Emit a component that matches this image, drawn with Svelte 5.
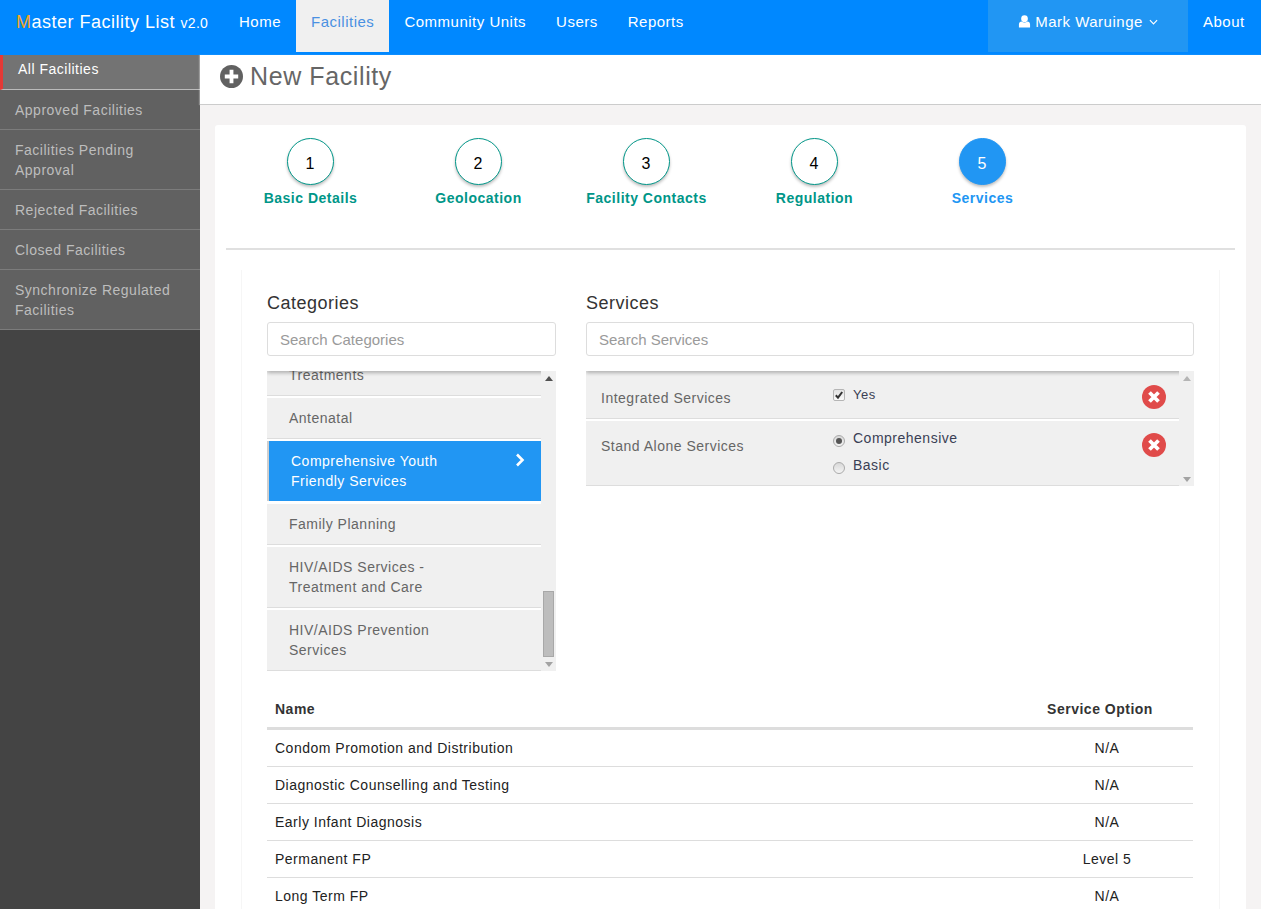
<script>
	const navLinks = ['Home', 'Facilities', 'Community Units', 'Users', 'Reports'];
	const sideLinks = [
		'All Facilities',
		'Approved Facilities',
		'Facilities Pending Approval',
		'Rejected Facilities',
		'Closed Facilities',
		'Synchronize Regulated Facilities'
	];
	const steps = ['Basic Details', 'Geolocation', 'Facility Contacts', 'Regulation', 'Services'];
	const categories = [
		'Antenatal',
		'Comprehensive Youth Friendly Services',
		'Family Planning',
		'HIV/AIDS Services - Treatment and Care',
		'HIV/AIDS Prevention Services'
	];
	const rows = [
		['Condom Promotion and Distribution', 'N/A'],
		['Diagnostic Counselling and Testing', 'N/A'],
		['Early Infant Diagnosis', 'N/A'],
		['Permanent FP', 'Level 5'],
		['Long Term FP', 'N/A']
	];
</script>

<div class="page">
	<header class="navbar">
		<div class="brand"><span class="m">M</span>aster Facility List <small>v2.0</small></div>
		<nav class="links">
			{#each navLinks as link, i}
				<span class="link" class:active={i === 1}>{link}</span>
			{/each}
		</nav>
		<div class="right">
			<div class="user">
				<svg class="user-icon" viewBox="0 0 14 14" width="13" height="13">
					<circle cx="7" cy="4" r="3.6" fill="#fff" />
					<path d="M1 13.4V10.2C1 8.4 2.2 7 4 7c.8.7 1.8 1 3 1s2.200-.3 3-1c1.800 0 3 1.400 3 3.200v3.200z" fill="#fff" />
				</svg>
				<span>Mark Waruinge</span>
				<svg class="caret" viewBox="0 0 10 6" width="9" height="6">
					<path d="M1 1l4 4 4-4" fill="none" stroke="#fff" stroke-width="1.300" />
				</svg>
			</div>
			<span class="link about">About</span>
		</div>
	</header>

	<div class="body">
		<aside class="sidebar">
			{#each sideLinks as link, i}
				<div class="side-item" class:current={i === 0}>{link}</div>
			{/each}
		</aside>

		<main class="content">
			<div class="title-bar">
				<svg viewBox="0 0 24 24" width="23" height="23">
					<circle cx="12" cy="12" r="12" fill="#616161" />
					<path d="M10 5h4v5h5v4h-5v5h-4v-5H5v-4h5z" fill="#fff" />
				</svg>
				<h1>New Facility</h1>
			</div>

			<section class="card">
				<div class="steps">
					{#each steps as step, i}
						<div class="step" class:on={i === 4}>
							<div class="circle">{i + 1}</div>
							<div class="step-label">{step}</div>
						</div>
					{/each}
				</div>
				<hr />

				<div class="inner">
					<div class="columns">
						<div class="col-cat">
							<h2>Categories</h2>
							<input type="text" placeholder="Search Categories" />
							<div class="scroller">
								<div class="list">
									<div class="cat clipped">Treatments</div>
									{#each categories as cat, i}
										<div class="cat" class:selected={i === 1}>
											<span>{cat}</span>
											{#if i === 1}
												<svg viewBox="0 0 10 14" width="10" height="14">
													<path d="M2 1.500L7.500 7 2 12.500" fill="none" stroke="#fff" stroke-width="2.600" />
												</svg>
											{/if}
										</div>
									{/each}
								</div>
								<div class="bar">
									<i class="up"></i>
									<b class="thumb"></b>
									<i class="down"></i>
								</div>
							</div>
						</div>

						<div class="col-srv">
							<h2>Services</h2>
							<input type="text" placeholder="Search Services" />
							<div class="scroller srv">
								<div class="list">
									<div class="srv-row">
										<div class="srv-name">Integrated Services</div>
										<div class="srv-opts">
											<div class="opt">
												<span class="box">
													<svg viewBox="0 0 12 12" width="12" height="12">
														<path d="M2.800 6.200L5 8.600 9.200 3" fill="none" stroke="#333" stroke-width="2" />
													</svg>
												</span>
												Yes
											</div>
										</div>
										<svg class="remove" viewBox="0 0 24 24" width="24" height="24">
											<circle cx="12" cy="12" r="12" fill="#e04b4a" />
											<path d="M7.500 7.500l9 9M16.500 7.500l-9 9" stroke="#fff" stroke-width="3.800" />
										</svg>
									</div>
									<div class="srv-row last">
										<div class="srv-name">Stand Alone Services</div>
										<div class="srv-opts">
											<div class="opt big"><span class="box round on"></span>Comprehensive</div>
											<div class="opt big"><span class="box round"></span>Basic</div>
										</div>
										<svg class="remove" viewBox="0 0 24 24" width="24" height="24">
											<circle cx="12" cy="12" r="12" fill="#e04b4a" />
											<path d="M7.500 7.500l9 9M16.500 7.500l-9 9" stroke="#fff" stroke-width="3.800" />
										</svg>
									</div>
								</div>
								<div class="bar plain">
									<i class="up light"></i>
									<i class="down"></i>
								</div>
							</div>
						</div>
					</div>

					<table>
						<thead>
							<tr><th>Name</th><th class="opt-col">Service Option</th></tr>
						</thead>
						<tbody>
							{#each rows as row}
								<tr><td>{row[0]}</td><td class="opt-col val">{row[1]}</td></tr>
							{/each}
						</tbody>
					</table>
				</div>
			</section>
		</main>
	</div>
</div>

<style>
	:global(body) {
		margin: 0;
		font-family: 'Liberation Sans', Arial, sans-serif;
		font-size: 14px;
		letter-spacing: 0.5px;
	}

	.page {
		height: 909px;
		overflow: hidden;
		display: flex;
		flex-direction: column;
	}

	.navbar {
		flex: none;
		height: 55px;
		background: #0088ff;
		display: flex;
		color: #fff;
	}

	.brand {
		padding: 13px 0 0 16px;
		width: 208px;
		box-sizing: border-box;
		font-size: 18px;
		line-height: 18px;
		letter-spacing: 0.5px;
		white-space: nowrap;
	}

	.brand .m {
		color: #f5a623;
	}

	.brand small {
		font-size: 14px;
		letter-spacing: 0.3px;
	}

	.links {
		display: flex;
		margin-left: 16px;
	}

	.link {
		height: 52px;
		box-sizing: border-box;
		padding: 14px 15px 0;
		line-height: 16px;
		font-size: 15px;
	}

	.link.active {
		background: #f0f0f0;
		color: #4a90e2;
	}

	.right {
		margin-left: auto;
		display: flex;
	}

	.user {
		width: 200px;
		height: 52px;
		background: #2196f3;
		display: flex;
		align-items: flex-start;
		justify-content: center;
		gap: 4px;
		padding-top: 14px;
		box-sizing: border-box;
		line-height: 16px;
		font-size: 15px;
	}

	.user-icon {
		margin-top: 1px;
	}

	.caret {
		margin: 5px 0 0 2px;
	}

	.about {
		width: 73px;
	}

	.body {
		flex: 1;
		display: flex;
		min-height: 0;
	}

	.sidebar {
		flex: none;
		width: 200px;
		background: #444;
		color: #bdbdbd;
	}

	.side-item {
		background: #616161;
		border-bottom: 1px solid #7c7c7c;
		padding: 10px 15px 9px;
		line-height: 20px;
	}

	.side-item.current {
		background: #737373;
		color: #fff;
		border-left: 3px solid #e53935;
		border-bottom-color: #bbb;
		padding: 4px 15px 10px;
	}

	.content {
		flex: 1;
		background: #f5f3f3;
		min-width: 0;
	}

	.title-bar {
		height: 43px;
		background: #fff;
		border-bottom: 1px solid #ccc;
		display: flex;
		align-items: center;
		padding: 0 0 6px 20px;
		gap: 7px;
		box-shadow: -1px 0 1px rgba(255, 255, 255, 0.3);
	}

	h1 {
		margin: 0;
		font-size: 25px;
		font-weight: 400;
		color: #666;
		letter-spacing: 0.6px;
	}

	.card {
		margin: 20px 15px 0;
		background: #fff;
		border-radius: 3px;
		padding: 13px 11px 0;
	}

	.steps {
		display: flex;
		height: 110px;
	}

	.step {
		width: 168px;
		display: flex;
		flex-direction: column;
		align-items: center;
		color: #009688;
		font-weight: 700;
	}

	.circle {
		width: 47px;
		height: 47px;
		box-sizing: border-box;
		border-radius: 50%;
		border: 1px solid #009688;
		background: #fff;
		color: #000;
		font-weight: 400;
		font-size: 16px;
		display: flex;
		align-items: center;
		justify-content: center;
		padding-top: 4px;
		box-shadow: 0 2px 3px rgba(0, 0, 0, 0.25);
		letter-spacing: 0;
	}

	.step-label {
		margin-top: 5px;
		padding-left: 1px;
		line-height: 16px;
		white-space: nowrap;
	}

	.step.on {
		color: #2196f3;
	}

	.step.on .circle {
		background: #2196f3;
		border-color: #2196f3;
		color: #fff;
	}

	hr {
		margin: 0;
		border: none;
		border-top: 2px solid #e0e0e0;
	}

	.inner {
		margin: 20px 15px 0;
		padding: 22px 26px 0 25px;
		border-left: 1px solid #f6f6f6;
		border-right: 1px solid #f6f6f6;
		box-sizing: border-box;
	}

	.columns {
		display: flex;
		gap: 30px;
	}

	.col-cat {
		width: 289px;
		flex: none;
	}

	.col-srv {
		width: 608px;
		flex: none;
	}

	h2 {
		margin: 0 0 8px;
		font-size: 18px;
		line-height: 22px;
		font-weight: 400;
		color: #333;
	}

	input[type='text'] {
		display: block;
		width: 100%;
		height: 34px;
		box-sizing: border-box;
		border: 1px solid #ddd;
		border-radius: 3px;
		padding: 0 12px;
		font: inherit;
		font-size: 15px;
		letter-spacing: 0;
		outline: none;
		background: #fff;
	}

	input::placeholder {
		color: #9a9a9a;
		opacity: 1;
	}

	.scroller {
		margin-top: 15px;
		height: 300px;
		display: flex;
		background: #f0f0f0;
		overflow: hidden;
		position: relative;
	}

	.scroller::before {
		content: '';
		position: absolute;
		left: 0;
		right: 0;
		top: -3px;
		height: 3px;
		box-shadow: 0 1px 4px rgba(0, 0, 0, 0.45);
	}

	.scroller.srv {
		height: 115px;
	}

	.list {
		flex: 1;
		min-width: 0;
		background: #fff;
	}

	.bar {
		flex: none;
		width: 15px;
		position: relative;
		background: #f0f0f0;
	}

	.bar i {
		position: absolute;
		left: 4px;
		width: 0;
		height: 0;
		border-left: 4px solid transparent;
		border-right: 4px solid transparent;
	}

	.up {
		top: 5px;
		border-bottom: 5px solid #505050;
	}

	.up.light {
		border-bottom-color: #b5b5b5;
	}

	.down {
		bottom: 4px;
		border-top: 5px solid #a3a3a3;
	}

	.thumb {
		position: absolute;
		left: 2px;
		right: 2px;
		bottom: 14px;
		height: 66px;
		background: #bdbdbd;
		border: 1px solid #a8a8a8;
		box-sizing: border-box;
	}

	.cat {
		display: flex;
		justify-content: space-between;
		background: #f0f0f0;
		border-bottom: 1px solid #ddd;
		color: #666;
		line-height: 20px;
		padding: 10px 16px 10px 22px;
		margin-bottom: 2px;
	}

	.cat span {
		width: 175px;
	}

	.cat.clipped {
		margin-top: -16px;
	}

	.cat.selected {
		background: #2196f3;
		color: #fff;
		border-left: 2px solid #cfcfcf;
		border-bottom: none;
		height: 60px;
		box-sizing: border-box;
		margin-bottom: 3px;
	}

	.cat.selected svg {
		margin-top: 2px;
	}

	.cat:not(.selected) span {
		width: 190px;
	}

	.srv-row {
		display: flex;
		align-items: flex-start;
		background: #f0f0f0;
		border-bottom: 1px solid #ddd;
		color: #666;
		height: 48px;
		box-sizing: border-box;
		margin-bottom: 2px;
		padding: 17px 0 0 15px;
	}

	.srv-row.last {
		height: 65px;
		margin-bottom: 0;
		padding-top: 15px;
	}

	.srv-name {
		width: 232px;
		flex: none;
		line-height: 20px;
	}

	.srv-opts {
		flex: 1;
		margin-top: -2px;
	}

	.last .srv-opts {
		margin-top: -12px;
	}

	.opt {
		display: flex;
		align-items: center;
		font-size: 13px;
		line-height: 18px;
		color: #3a3f55;
	}

	.opt.big {
		font-size: 14px;
		height: 27px;
	}

	.box {
		width: 12px;
		height: 12px;
		margin: 0 8px 0 0;
		flex: none;
		box-sizing: border-box;
		border: 1px solid #b5b5b5;
		border-radius: 2px;
		background: linear-gradient(#e2e2e2, #fafafa);
		display: flex;
		align-items: center;
		justify-content: center;
	}

	.box svg {
		flex: none;
	}

	.opt.big .box {
		margin-top: 7px;
	}

	.box.round {
		border-radius: 50%;
		border-color: #aaa;
		background: linear-gradient(#d8d8d8, #f4f4f4);
	}

	.box.on::after {
		content: '';
		width: 6px;
		height: 6px;
		border-radius: 50%;
		background: #555;
	}

	.remove {
		flex: none;
		margin: -3px 13px 0 0;
	}

	table {
		width: 100%;
		margin-top: 20px;
		border-collapse: collapse;
		color: #222;
	}

	th {
		text-align: left;
		padding: 0 8px;
		height: 36px;
		border-bottom: 3px solid #ddd;
		color: #333;
	}

	td {
		padding: 0 8px;
		height: 36px;
		border-bottom: 1px solid #ddd;
	}

	.opt-col {
		width: 186px;
		box-sizing: border-box;
		text-align: center;
	}

	.val {
		padding-left: 22px;
	}
</style>
